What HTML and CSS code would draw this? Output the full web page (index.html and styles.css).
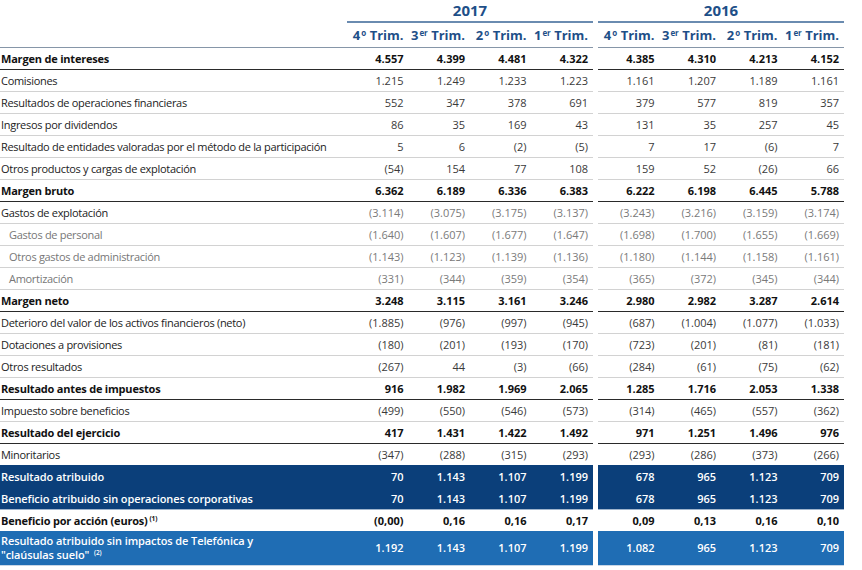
FILE: index.html
```html
<!DOCTYPE html>
<html lang="es">
<head>
<meta charset="utf-8">
<link rel="stylesheet" href="styles.css">
</head>
<body>
<div class="tbl">
  <div class="row yrs">
    <div class="lab"></div>
    <div class="grp year">2017</div>
    <div class="gap"></div>
    <div class="grp year">2016</div>
  </div>
  <div class="row qtrs">
    <div class="lab"></div>
    <div class="grp"><span>4<sup>o</sup> Trim.</span><span>3<sup>er</sup> Trim.</span><span>2<sup>o</sup> Trim.</span><span>1<sup>er</sup> Trim.</span></div>
    <div class="gap"></div>
    <div class="grp"><span>4<sup>o</sup> Trim.</span><span>3<sup>er</sup> Trim.</span><span>2<sup>o</sup> Trim.</span><span>1<sup>er</sup> Trim.</span></div>
  </div>

  <div class="row b"><div class="lab">Margen de intereses</div><div class="grp"><span>4.557</span><span>4.399</span><span>4.481</span><span>4.322</span></div><div class="gap"></div><div class="grp"><span>4.385</span><span>4.310</span><span>4.213</span><span>4.152</span></div></div>
  <div class="row"><div class="lab">Comisiones</div><div class="grp"><span>1.215</span><span>1.249</span><span>1.233</span><span>1.223</span></div><div class="gap"></div><div class="grp"><span>1.161</span><span>1.207</span><span>1.189</span><span>1.161</span></div></div>
  <div class="row"><div class="lab">Resultados de operaciones financieras</div><div class="grp"><span>552</span><span>347</span><span>378</span><span>691</span></div><div class="gap"></div><div class="grp"><span>379</span><span>577</span><span>819</span><span>357</span></div></div>
  <div class="row"><div class="lab">Ingresos por dividendos</div><div class="grp"><span>86</span><span>35</span><span>169</span><span>43</span></div><div class="gap"></div><div class="grp"><span>131</span><span>35</span><span>257</span><span>45</span></div></div>
  <div class="row"><div class="lab">Resultado de entidades valoradas por el método de la participación</div><div class="grp"><span>5</span><span>6</span><span>(2)</span><span>(5)</span></div><div class="gap"></div><div class="grp"><span>7</span><span>17</span><span>(6)</span><span>7</span></div></div>
  <div class="row"><div class="lab">Otros productos y cargas de explotación</div><div class="grp"><span>(54)</span><span>154</span><span>77</span><span>108</span></div><div class="gap"></div><div class="grp"><span>159</span><span>52</span><span>(26)</span><span>66</span></div></div>
  <div class="row b"><div class="lab">Margen bruto</div><div class="grp"><span>6.362</span><span>6.189</span><span>6.336</span><span>6.383</span></div><div class="gap"></div><div class="grp"><span>6.222</span><span>6.198</span><span>6.445</span><span>5.788</span></div></div>
  <div class="row g"><div class="lab">Gastos de explotación</div><div class="grp"><span>(3.114)</span><span>(3.075)</span><span>(3.175)</span><span>(3.137)</span></div><div class="gap"></div><div class="grp"><span>(3.243)</span><span>(3.216)</span><span>(3.159)</span><span>(3.174)</span></div></div>
  <div class="row g sub"><div class="lab">Gastos de personal</div><div class="grp"><span>(1.640)</span><span>(1.607)</span><span>(1.677)</span><span>(1.647)</span></div><div class="gap"></div><div class="grp"><span>(1.698)</span><span>(1.700)</span><span>(1.655)</span><span>(1.669)</span></div></div>
  <div class="row g sub"><div class="lab">Otros gastos de administración</div><div class="grp"><span>(1.143)</span><span>(1.123)</span><span>(1.139)</span><span>(1.136)</span></div><div class="gap"></div><div class="grp"><span>(1.180)</span><span>(1.144)</span><span>(1.158)</span><span>(1.161)</span></div></div>
  <div class="row g sub"><div class="lab">Amortización</div><div class="grp"><span>(331)</span><span>(344)</span><span>(359)</span><span>(354)</span></div><div class="gap"></div><div class="grp"><span>(365)</span><span>(372)</span><span>(345)</span><span>(344)</span></div></div>
  <div class="row b"><div class="lab">Margen neto</div><div class="grp"><span>3.248</span><span>3.115</span><span>3.161</span><span>3.246</span></div><div class="gap"></div><div class="grp"><span>2.980</span><span>2.982</span><span>3.287</span><span>2.614</span></div></div>
  <div class="row"><div class="lab">Deterioro del valor de los activos financieros (neto)</div><div class="grp"><span>(1.885)</span><span>(976)</span><span>(997)</span><span>(945)</span></div><div class="gap"></div><div class="grp"><span>(687)</span><span>(1.004)</span><span>(1.077)</span><span>(1.033)</span></div></div>
  <div class="row"><div class="lab">Dotaciones a provisiones</div><div class="grp"><span>(180)</span><span>(201)</span><span>(193)</span><span>(170)</span></div><div class="gap"></div><div class="grp"><span>(723)</span><span>(201)</span><span>(81)</span><span>(181)</span></div></div>
  <div class="row"><div class="lab">Otros resultados</div><div class="grp"><span>(267)</span><span>44</span><span>(3)</span><span>(66)</span></div><div class="gap"></div><div class="grp"><span>(284)</span><span>(61)</span><span>(75)</span><span>(62)</span></div></div>
  <div class="row b"><div class="lab">Resultado antes de impuestos</div><div class="grp"><span>916</span><span>1.982</span><span>1.969</span><span>2.065</span></div><div class="gap"></div><div class="grp"><span>1.285</span><span>1.716</span><span>2.053</span><span>1.338</span></div></div>
  <div class="row"><div class="lab">Impuesto sobre beneficios</div><div class="grp"><span>(499)</span><span>(550)</span><span>(546)</span><span>(573)</span></div><div class="gap"></div><div class="grp"><span>(314)</span><span>(465)</span><span>(557)</span><span>(362)</span></div></div>
  <div class="row b"><div class="lab">Resultado del ejercicio</div><div class="grp"><span>417</span><span>1.431</span><span>1.422</span><span>1.492</span></div><div class="gap"></div><div class="grp"><span>971</span><span>1.251</span><span>1.496</span><span>976</span></div></div>
  <div class="row"><div class="lab">Minoritarios</div><div class="grp"><span>(347)</span><span>(288)</span><span>(315)</span><span>(293)</span></div><div class="gap"></div><div class="grp"><span>(293)</span><span>(286)</span><span>(373)</span><span>(266)</span></div></div>
  <div class="row dark"><div class="lab">Resultado atribuido</div><div class="grp"><span>70</span><span>1.143</span><span>1.107</span><span>1.199</span></div><div class="gap"></div><div class="grp"><span>678</span><span>965</span><span>1.123</span><span>709</span></div></div>
  <div class="row dark"><div class="lab">Beneficio atribuido sin operaciones corporativas</div><div class="grp"><span>70</span><span>1.143</span><span>1.107</span><span>1.199</span></div><div class="gap"></div><div class="grp"><span>678</span><span>965</span><span>1.123</span><span>709</span></div></div>
  <div class="row b plain"><div class="lab">Beneficio por acción (euros)<sup class="fn">(1)</sup></div><div class="grp"><span>(0,00)</span><span>0,16</span><span>0,16</span><span>0,17</span></div><div class="gap"></div><div class="grp"><span>0,09</span><span>0,13</span><span>0,16</span><span>0,10</span></div></div>
  <div class="row light"><div class="lab">Resultado atribuido sin impactos de Telefónica y<br>"claúsulas suelo" <sup class="fn">(2)</sup></div><div class="grp"><span>1.192</span><span>1.143</span><span>1.107</span><span>1.199</span></div><div class="gap"></div><div class="grp"><span>1.082</span><span>965</span><span>1.123</span><span>709</span></div></div>
</div>
</body>
</html>
```
FILE: styles.css
```css
body {
  margin: 0;
  background: #ffffff;
  font-family: "Open Sans", "Liberation Sans", sans-serif;
  color: #222222;
}

.tbl {
  width: 844px;
}

.row {
  display: grid;
  grid-template-columns: 347px 246px 5px 246px;
  height: 22px;
}

.row > .lab,
.row > .grp {
  border-bottom: 1px solid #d2d2d2;
  padding-top: 1px;
}

.lab {
  font-size: 11px;
  line-height: 21px;
  padding-left: 1px;
  white-space: nowrap;
  letter-spacing: -0.3px;
}

.grp {
  display: grid;
  grid-template-columns: repeat(4, 1fr);
  font-size: 11px;
  line-height: 21px;
  color: #3a3a3a;
}

.grp > span {
  text-align: right;
  padding-right: 5px;
}

/* header */
.yrs {
  height: 23px;
}

.row.yrs > .lab {
  border-bottom: none;
}

.row.yrs > .year {
  display: block;
  text-align: center;
  font-size: 15px;
  font-weight: 700;
  color: #1e4f88;
  line-height: 21px;
  padding-top: 0;
  border-bottom: 2px solid #6a8bb0;
}

.qtrs {
  height: 24px;
}

.row.qtrs > .lab,
.row.qtrs > .grp {
  border-bottom: 1px solid #8696a8;
  padding-top: 0;
}

.qtrs .grp {
  font-size: 13px;
  font-weight: 700;
  color: #1e4f88;
  line-height: 24px;
}

.qtrs sup {
  font-size: 8px;
  vertical-align: 4px;
  line-height: 0;
  margin-left: 1px;
}

/* bold rows */
.b .lab,
.b .grp {
  font-weight: 700;
  color: #111111;
}

.b .lab {
  letter-spacing: -0.2px;
}

.row.b > .lab,
.row.b > .grp {
  border-bottom: 1px solid #2a2a2a;
}

.row.plain > .lab,
.row.plain > .grp {
  border-bottom: none;
}

/* grey rows */
.g .grp {
  color: #7a7a7a;
}

.sub .lab {
  color: #777777;
  padding-left: 9px;
}

/* bands */
.dark > .lab,
.dark > .grp {
  background: #0b3f7a;
  color: #ffffff;
  font-weight: 600;
}

.dark > .lab {
  letter-spacing: -0.1px;
}

.row.dark > .lab,
.row.dark > .grp {
  border-bottom: 1px solid #9fb4cc;
}

.light {
  height: 35px;
}

.light > .lab,
.light > .grp {
  background: #1f6db4;
  color: #ffffff;
  font-weight: 600;
}

.row.light > .lab {
  line-height: 14px;
  padding-top: 3px;
  letter-spacing: -0.1px;
}

.row.light > .grp {
  line-height: 34px;
  padding-top: 0;
}

.row.light > .lab,
.row.light > .grp {
  border-bottom: 1px solid #c8d6e6;
}

.fn {
  font-size: 6.5px;
  vertical-align: 4px;
  line-height: 0;
  margin-left: 2px;
}
```
